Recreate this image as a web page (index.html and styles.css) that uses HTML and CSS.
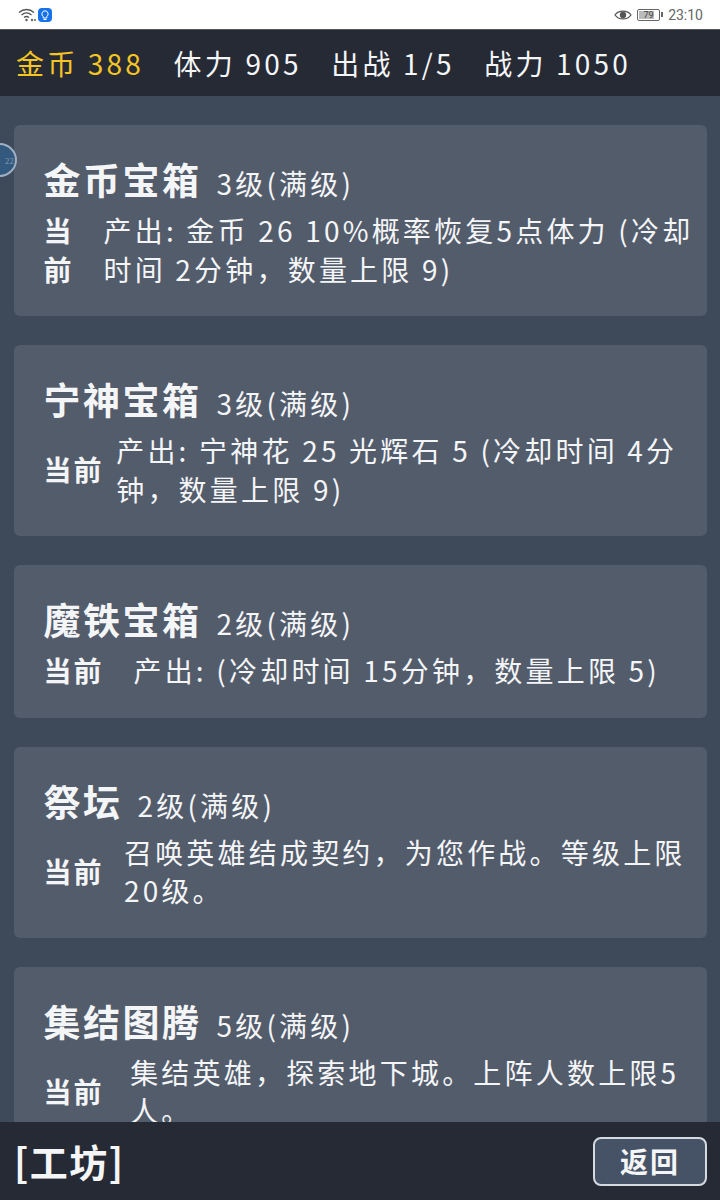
FILE: index.html
```html
<!DOCTYPE html>
<html lang="zh-CN">
<head>
    <meta charset="utf-8" />
    <title>工坊</title>
    <link rel="stylesheet" href="styles.css">
</head>
<body>
    <div class="status_bar">
        <div class="status_left">
            <svg class="icon_wifi" width="18" height="14" viewBox="0 0 18 14">
                <path d="M1 4.5C5.5 .5 11.5 .5 16 4.5" fill="none" stroke="#555" stroke-width="1.3" />
                <path d="M3.5 7C6.5 4.5 10.5 4.5 13.5 7" fill="none" stroke="#555" stroke-width="1.3" />
                <path d="M6 9.5C7.5 8.3 9.5 8.3 11 9.5" fill="none" stroke="#555" stroke-width="1.3" />
                <circle cx="8.5" cy="12" r="1.2" fill="#555" />
                <circle cx="14" cy="12" r="1.2" fill="#666" />
                <circle cx="17" cy="12" r="1" fill="#666" />
            </svg>
            <svg width="14" height="14" viewBox="0 0 14 14">
                <rect width="14" height="14" rx="4" fill="#1672e8" />
                <path d="M7 2.8a3.2 3.2 0 0 0-1.8 5.8V10h3.6V8.6A3.2 3.2 0 0 0 7 2.8z" fill="none" stroke="#fff" stroke-width="1" />
                <path d="M5.5 11.5h3" stroke="#fff" stroke-width="1" />
            </svg>
        </div>
        <div class="status_right">
            <svg width="18" height="12" viewBox="0 0 18 12">
                <path d="M1 6C4.5 .8 13.5 .8 17 6C13.5 11.2 4.5 11.2 1 6z" fill="none" stroke="#555" stroke-width="1.3" />
                <circle cx="9" cy="6" r="3.2" fill="#555" />
            </svg>
            <div class="battery">
                <div class="battery_box"><span class="battery_fill"></span><span class="battery_num">79</span></div>
                <span class="battery_tip"></span>
            </div>
            <span class="clock">23:10</span>
        </div>
    </div>

    <div class="top_bar">
        <span class="gold">金币 388</span>
        <span>体力 905</span>
        <span>出战 1/5</span>
        <span>战力 1050</span>
    </div>

    <div class="float_ball"><span>22</span></div>

    <div class="content">
        <div class="card">
            <div class="card_head"><span class="card_name">金币宝箱</span><span class="card_level">3级(满级)</span></div>
            <div class="card_row">
                <div class="card_label">当<br />前</div>
                <div class="card_text">产出: 金币 26 10%概率恢复5点体力 (冷却<br />时间 2分钟，数量上限 9)</div>
            </div>
        </div>
        <div class="card">
            <div class="card_head"><span class="card_name">宁神宝箱</span><span class="card_level">3级(满级)</span></div>
            <div class="card_row">
                <div class="card_label">当前</div>
                <div class="card_text">产出: 宁神花 25 光辉石 5 (冷却时间 4分<br />钟，数量上限 9)</div>
            </div>
        </div>
        <div class="card">
            <div class="card_head"><span class="card_name">魔铁宝箱</span><span class="card_level">2级(满级)</span></div>
            <div class="card_row">
                <div class="card_label">当前</div>
                <div class="card_text">产出: (冷却时间 15分钟，数量上限 5)</div>
            </div>
        </div>
        <div class="card">
            <div class="card_head"><span class="card_name">祭坛</span><span class="card_level">2级(满级)</span></div>
            <div class="card_row">
                <div class="card_label">当前</div>
                <div class="card_text card_text_right">召唤英雄结成契约，为您作战。等级上限<br />20级。</div>
            </div>
        </div>
        <div class="card">
            <div class="card_head"><span class="card_name">集结图腾</span><span class="card_level">5级(满级)</span></div>
            <div class="card_row">
                <div class="card_label">当前</div>
                <div class="card_text card_text_right">集结英雄，探索地下城。上阵人数上限5<br />人。</div>
            </div>
        </div>
    </div>

    <div class="bottom_bar">
        <div class="page_title">[工坊]</div>
        <div class="btn_back">返回</div>
    </div>
</body>
</html>
```

FILE: styles.css
```css
body {
    margin: 0;
    width: 720px;
    height: 1200px;
    overflow: hidden;
    position: relative;
    display: flex;
    flex-direction: column;
    background-color: #3e4a59;
    color: #f4f5f7;
    font-family: "Noto Sans CJK SC", "Noto Sans", sans-serif;
}

.status_bar {
    height: 29px;
    flex: none;
    background-color: #ffffff;
    display: flex;
    justify-content: space-between;
    align-items: center;
    padding: 0 17px 0 18px;
}

.status_left {
    display: flex;
    align-items: center;
    gap: 2px;
}

.status_right {
    display: flex;
    align-items: center;
    gap: 5px;
    color: #666;
}

.battery {
    display: flex;
    align-items: center;
    gap: 1px;
}

.battery_box {
    width: 21px;
    height: 10px;
    border: 1px solid #666;
    border-radius: 2px;
    position: relative;
    font-size: 9px;
    line-height: 10px;
    text-align: center;
}

.battery_fill {
    position: absolute;
    left: 1px;
    top: 1px;
    bottom: 1px;
    width: 15px;
    background-color: #bbb;
}

.battery_num {
    position: relative;
    font-family: "Roboto", sans-serif;
    color: #444;
}

.battery_tip {
    width: 2px;
    height: 5px;
    background-color: #666;
}

.clock {
    font: 14px "Roboto", sans-serif;
}

.top_bar {
    height: 67px;
    flex: none;
    box-sizing: border-box;
    background-color: #252a35;
    border-top: 1px solid #555;
    display: flex;
    align-items: center;
    gap: 29.5px;
    padding: 0 16px;
    font-size: 28px;
    letter-spacing: 3.2px;
}

.gold {
    color: #f5c524;
}

.float_ball {
    position: absolute;
    left: -18px;
    top: 143px;
    width: 30px;
    height: 30px;
    border: 2px solid #9fb0c4;
    border-radius: 50%;
    background-color: #33597f;
    color: #7f97b2;
    font-size: 8px;
    display: flex;
    align-items: center;
    justify-content: flex-end;
    padding-right: 1px;
    box-sizing: content-box;
}

.content {
    flex: 1;
    min-height: 0;
    overflow: hidden;
    padding: 29px 13px 0 14px;
    display: flex;
    flex-direction: column;
    gap: 29px;
}

.card {
    flex: none;
    background-color: #535c6b;
    border-radius: 6px;
    padding: 28px 17px 28px 29.5px;
}

.card_head {
    display: flex;
    align-items: baseline;
    gap: 15px;
    margin-bottom: 6px;
}

.card_name {
    font-size: 37px;
    font-weight: 700;
    line-height: 52px;
    letter-spacing: 2.5px;
}

.card_level {
    font-size: 28px;
    letter-spacing: 3.2px;
}

.card_row {
    display: flex;
    align-items: center;
}

.card_label {
    width: 60px;
    flex: none;
    font-size: 28px;
    font-weight: 700;
    line-height: 38.5px;
    letter-spacing: 2px;
}

.card_text {
    margin: 0 auto;
    white-space: nowrap;
    font-size: 28px;
    line-height: 38.5px;
    letter-spacing: 3.2px;
}

.card_text_right {
    padding-left: 16px;
}

.bottom_bar {
    height: 78px;
    flex: none;
    background-color: #252a35;
    display: flex;
    justify-content: space-between;
    align-items: center;
    padding: 0 13px 0 14px;
    position: relative;
}

.page_title {
    font-size: 38px;
    font-weight: 700;
    letter-spacing: 1.5px;
    margin-bottom: 2px;
}

.btn_back {
    width: 110px;
    height: 45px;
    border: 2px solid #d6dae0;
    border-radius: 8px;
    background-color: #465366;
    font-size: 28px;
    font-weight: 700;
    letter-spacing: 2px;
    display: flex;
    align-items: center;
    justify-content: center;
}
```
